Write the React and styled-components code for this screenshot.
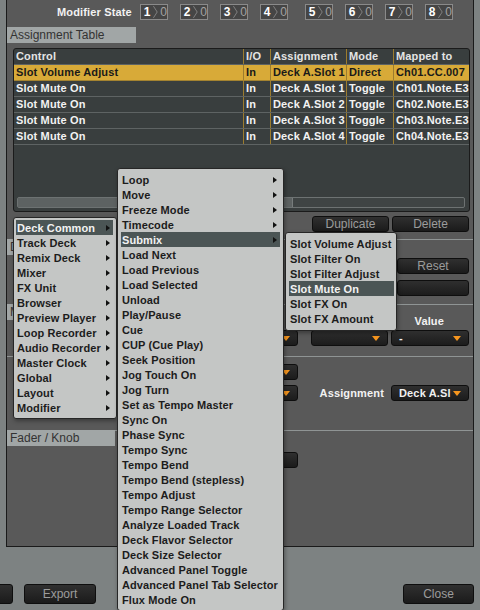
import React from 'react';
import styled, { createGlobalStyle } from 'styled-components';

const GlobalStyle = createGlobalStyle`
  html, body { margin: 0; padding: 0; }
  body {
    background: #7d8282;
    font-family: "Liberation Sans", Arial, sans-serif;
  }
`;

const Page = styled.div`
  position: relative;
  width: 480px;
  height: 610px;
  overflow: hidden;
  background: #7d8282;
`;

const Panel = styled.div`
  margin-left: 6px;
  width: 468px;
  height: 547px;
  box-sizing: border-box;
  background: #595959;
  border: 1px solid #1a1a1a;
  border-top: none;
  display: flex;
  flex-direction: column;
`;

const TopBar = styled.div`
  height: 27px;
  display: flex;
  align-items: center;
  padding-left: 50px;
  gap: 8px;
`;

const TopLabel = styled.span`
  color: #f2f2f2;
  font-weight: bold;
  font-size: 11px;
  letter-spacing: 0.15px;
  margin-top: -3px;
`;

const ModGroup = styled.div`
  display: flex;
  gap: 12px;
  margin-top: -3px;
  margin-right: ${(p) => p.$after || 0}px;
`;

const ModBox = styled.div`
  display: flex;
  align-items: center;
  width: 28px;
  height: 16px;
  box-sizing: border-box;
  border: 1px solid #8a8a8a;
  background: #454545;
  font-size: 12px;
  font-weight: bold;
`;

const ModNum = styled.span`
  width: 11px;
  padding-left: 3px;
  color: #ffffff;
`;

const ModZero = styled.span`
  margin-left: 2px;
  color: #a3a3a3;
  font-weight: normal;
`;

const Tab = styled.div`
  width: ${(p) => p.$w}px;
  height: 16px;
  line-height: 16px;
  box-sizing: border-box;
  padding-left: 3px;
  background: #a1a6a6;
  color: #333;
  font-size: 12px;
  white-space: nowrap;
  overflow: hidden;
`;

const TableBox = styled.div`
  margin: 5px 3px 0 6px;
  height: 164px;
  box-sizing: border-box;
  border: 1px solid #1b1b1b;
  border-radius: 3px;
  background: #393e3e;
  display: flex;
  flex-direction: column;
  overflow: hidden;
`;

const Row = styled.div`
  display: grid;
  grid-template-columns: 229px 27px 76px 47px 1fr;
  height: 16px;
  box-sizing: border-box;
  border-bottom: 1px solid ${(p) => (p.$sel ? '#a48330' : '#5e6363')};
  background: ${(p) => (p.$sel ? '#d8aa38' : 'transparent')};
  color: ${(p) => (p.$sel ? '#1a1a1a' : p.$head ? '#e4e4e4' : '#f2f2f2')};
  font-size: 11px;
  font-weight: bold;
  letter-spacing: 0.15px;
  line-height: 15px;
`;

const Cell = styled.div`
  padding-left: 2px;
  white-space: nowrap;
  overflow: hidden;
  & + & {
    border-left: 1px solid ${(p) => (p.$sel ? '#9c7c2e' : '#5e6363')};
  }
`;

const Filler = styled.div`
  flex: 1;
`;

const ScrollTrack = styled.div`
  margin: 0 4px 3px 3px;
  height: 11px;
  box-sizing: border-box;
  border: 1px solid #6d7272;
  border-radius: 2px;
  background: #3f4444;
  display: flex;
`;

const ScrollThumb = styled.div`
  width: 274px;
  background: #5d6262;
  border-right: 1px solid #777c7c;
`;

const ButtonRow = styled.div`
  display: flex;
  justify-content: flex-end;
  gap: 3px;
  padding-right: 4px;
  margin-top: 4px;
`;

const Button = styled.div`
  width: ${(p) => p.$w}px;
  height: ${(p) => p.$h || 16}px;
  box-sizing: border-box;
  border: 1px solid #0e0e0e;
  border-radius: 3px;
  background: linear-gradient(#303030, #1b1b1b);
  color: #9c9c9c;
  font-size: 12px;
  display: flex;
  align-items: center;
  justify-content: center;
  margin-right: ${(p) => p.$mr || 0}px;
  margin-left: ${(p) => p.$ml || 0}px;
  flex-shrink: 0;
`;

const Section = styled.div`
  height: ${(p) => p.$h}px;
  box-sizing: border-box;
  border-top: 1px solid #8f9494;
  margin-top: ${(p) => p.$mt || 0}px;
  display: flex;
  flex-direction: column;
`;

const SectionTab = styled(Tab)`
  margin-top: -1px;
`;

const RightRow = styled.div`
  display: flex;
  justify-content: flex-end;
  align-items: center;
  gap: 3px;
  padding-right: 4px;
  margin-top: ${(p) => p.$mt || 0}px;
`;

const Label = styled.span`
  color: #f2f2f2;
  font-size: 11px;
  font-weight: bold;
  letter-spacing: 0.15px;
  margin-right: ${(p) => p.$mr || 0}px;
`;

const Drop = styled.div`
  position: relative;
  width: ${(p) => p.$w}px;
  height: 16px;
  box-sizing: border-box;
  border: 1px solid #0e0e0e;
  border-radius: 3px;
  background: linear-gradient(#2f2f2f, #1c1c1c);
  color: #f0f0f0;
  font-size: 11px;
  font-weight: bold;
  letter-spacing: 0.15px;
  line-height: 14px;
  padding-left: 7px;
  margin-right: ${(p) => p.$mr || 0}px;
  flex-shrink: 0;
  &::after {
    content: '';
    position: absolute;
    right: 7px;
    top: 5px;
    border-top: 5px solid #f7961e;
    border-left: 4px solid transparent;
    border-right: 4px solid transparent;
  }
`;

const Field = styled.div`
  width: ${(p) => p.$w}px;
  height: 16px;
  box-sizing: border-box;
  border: 1px solid #0e0e0e;
  border-radius: 3px;
  background: linear-gradient(#2f2f2f, #1c1c1c);
`;

const BottomBar = styled.div`
  display: flex;
  align-items: center;
  padding-top: 37px;
`;

const Spacer = styled.div`
  flex: 1;
`;

const Menu = styled.div`
  position: absolute;
  left: ${(p) => p.$x}px;
  top: ${(p) => p.$y}px;
  width: ${(p) => p.$w}px;
  box-sizing: border-box;
  padding: ${(p) => p.$pad};
  background: #c4c6c5;
  border: 1px solid #262626;
  border-radius: 3px;
  box-shadow: 1px 2px 4px rgba(0, 0, 0, 0.35);
`;

const Item = styled.div`
  display: flex;
  align-items: center;
  height: 15px;
  padding-left: 1px;
  padding-right: 3px;
  background: ${(p) => (p.$active ? '#4b5555' : 'transparent')};
  color: ${(p) => (p.$active ? '#f2f2f2' : '#1c1c1c')};
  font-size: 11px;
  font-weight: bold;
  letter-spacing: 0.1px;
  white-space: nowrap;
`;

const ItemText = styled.span`
  flex: 1;
`;

const Arrow = styled.span`
  width: 0;
  height: 0;
  border-left: 4px solid #111;
  border-top: 3.5px solid transparent;
  border-bottom: 3.5px solid transparent;
`;

const modifiers = [[1, 2, 3, 4], [5, 6, 7, 8]];

const columns = ['Control', 'I/O', 'Assignment', 'Mode', 'Mapped to'];

const rows = [
  ['Slot Volume Adjust', 'In', 'Deck A.Slot 1', 'Direct', 'Ch01.CC.007'],
  ['Slot Mute On', 'In', 'Deck A.Slot 1', 'Toggle', 'Ch01.Note.E3'],
  ['Slot Mute On', 'In', 'Deck A.Slot 2', 'Toggle', 'Ch02.Note.E3'],
  ['Slot Mute On', 'In', 'Deck A.Slot 3', 'Toggle', 'Ch03.Note.E3'],
  ['Slot Mute On', 'In', 'Deck A.Slot 4', 'Toggle', 'Ch04.Note.E3'],
];

const categories = [
  'Deck Common', 'Track Deck', 'Remix Deck', 'Mixer', 'FX Unit', 'Browser',
  'Preview Player', 'Loop Recorder', 'Audio Recorder', 'Master Clock',
  'Global', 'Layout', 'Modifier',
];

const deckCommon = [
  ['Loop', true], ['Move', true], ['Freeze Mode', true], ['Timecode', true],
  ['Submix', true], ['Load Next'], ['Load Previous'], ['Load Selected'],
  ['Unload'], ['Play/Pause'], ['Cue'], ['CUP (Cue Play)'], ['Seek Position'],
  ['Jog Touch On'], ['Jog Turn'], ['Set as Tempo Master'], ['Sync On'],
  ['Phase Sync'], ['Tempo Sync'], ['Tempo Bend'], ['Tempo Bend (stepless)'],
  ['Tempo Adjust'], ['Tempo Range Selector'], ['Analyze Loaded Track'],
  ['Deck Flavor Selector'], ['Deck Size Selector'], ['Advanced Panel Toggle'],
  ['Advanced Panel Tab Selector'], ['Flux Mode On'],
];

const submix = [
  'Slot Volume Adjust', 'Slot Filter On', 'Slot Filter Adjust',
  'Slot Mute On', 'Slot FX On', 'Slot FX Amount',
];

function Chevron() {
  return (
    <svg width="6" height="14" viewBox="0 0 6 14">
      <path d="M0.5 0 L5 7 L0.5 14" fill="none" stroke="#8a8a8a" strokeWidth="1" />
    </svg>
  );
}

export default function App() {
  return (
    <Page>
      <GlobalStyle />
      <Panel>
        <TopBar>
          <TopLabel>Modifier State</TopLabel>
          {modifiers.map((group, gi) => (
            <ModGroup key={gi} $after={gi === 0 ? 9 : 0}>
              {group.map((n) => (
                <ModBox key={n}>
                  <ModNum>{n}</ModNum>
                  <Chevron />
                  <ModZero>0</ModZero>
                </ModBox>
              ))}
            </ModGroup>
          ))}
        </TopBar>

        <Tab $w={129}>Assignment Table</Tab>
        <TableBox>
          <Row $head>
            {columns.map((c) => <Cell key={c}>{c}</Cell>)}
          </Row>
          {rows.map((r, i) => (
            <Row key={i} $sel={i === 0}>
              {r.map((c, j) => <Cell key={j} $sel={i === 0}>{c}</Cell>)}
            </Row>
          ))}
          <Filler />
          <ScrollTrack>
            <ScrollThumb />
          </ScrollTrack>
        </TableBox>
        <ButtonRow>
          <Button $w={77}>Duplicate</Button>
          <Button $w={77}>Delete</Button>
        </ButtonRow>

        <Section $h={65} $mt={7}>
          <SectionTab $w={108}>Device Mapping</SectionTab>
          <RightRow $mt={3}>
            <Button $w={72}>Reset</Button>
          </RightRow>
          <RightRow $mt={6}>
            <Field $w={72} />
          </RightRow>
        </Section>

        <Section $h={52}>
          <SectionTab $w={108}>Mapping Details</SectionTab>
          <RightRow $mt={-5}>
            <Label $mr={25}>Value</Label>
          </RightRow>
          <RightRow $mt={3}>
            <Drop $w={90} $mr={10} />
            <Drop $w={77} />
            <Drop $w={78}>-</Drop>
          </RightRow>
        </Section>

        <Section $h={74}>
          <RightRow $mt={7}>
            <Drop $w={90} $mr={171} />
          </RightRow>
          <RightRow $mt={5}>
            <Drop $w={90} $mr={19} />
            <Label $mr={4}>Assignment</Label>
            <Drop $w={78}>Deck A.Sl</Drop>
          </RightRow>
        </Section>

        <Section $h={116}>
          <SectionTab $w={108}>Fader / Knob</SectionTab>
          <RightRow $mt={6}>
            <Button $w={90} $mr={171} />
          </RightRow>
        </Section>
      </Panel>

      <BottomBar>
        <Button $w={72} $h={20} $ml={-59} />
        <Button $w={72} $h={20} $ml={11}>Export</Button>
        <Spacer />
        <Button $w={71} $h={20} $mr={6}>Close</Button>
      </BottomBar>

      <Menu $x={13} $y={217} $w={104} $pad="2px 3px 3px 2px">
        {categories.map((c, i) => (
          <Item key={c} $active={i === 0}>
            <ItemText>{c}</ItemText>
            <Arrow />
          </Item>
        ))}
      </Menu>

      <Menu $x={117} $y={168} $w={167} $pad="3px">
        {deckCommon.map(([c, sub]) => (
          <Item key={c} $active={c === 'Submix'}>
            <ItemText>{c}</ItemText>
            {sub && <Arrow />}
          </Item>
        ))}
      </Menu>

      <Menu $x={285} $y={232} $w={112} $pad="3px 2px 4px 3px">
        {submix.map((c) => (
          <Item key={c} $active={c === 'Slot Mute On'}>
            <ItemText>{c}</ItemText>
          </Item>
        ))}
      </Menu>
    </Page>
  );
}
